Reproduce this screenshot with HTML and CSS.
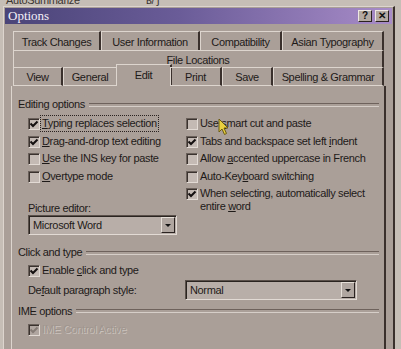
FILE: index.html
```html
<!DOCTYPE html>
<html lang="en">
<head>
  <meta charset="UTF-8">
  <title>Options</title>
  <link rel="stylesheet" href="styles.css">
</head>
<body>
  <!-- Window behind the dialog -->
  <div class="behind">
    <span class="behind-text">AutoSummarize</span>
    <span class="behind-key">ʁ/ ʃ</span>
  </div>

  <div class="window">
    <!-- Title bar -->
    <div class="titlebar">
      <span class="title">Options</span>
      <div class="title-buttons">
        <span class="tbtn">?</span>
        <span class="tbtn close">✕</span>
      </div>
    </div>

    <div class="body">
      <!-- Tab rows -->
      <div class="tab-row">
        <div class="tab w88">Track Changes</div>
        <div class="tab w99">User Information</div>
        <div class="tab w82">Compatibility</div>
        <div class="tab grow">Asian Typography</div>
      </div>
      <div class="tab-row">
        <div class="tab grow">File Locations</div>
      </div>
      <div class="tab-row front">
        <div class="tab w50">View</div>
        <div class="tab w55">General</div>
        <div class="tab active">Edit</div>
        <div class="tab w52">Print</div>
        <div class="tab w51">Save</div>
        <div class="tab grow">Spelling &amp; Grammar</div>
      </div>

      <!-- Edit page -->
      <div class="panel">
        <div class="group-title"><span>Editing options</span></div>
        <div class="columns">
          <div class="col">
            <div class="check on"><span class="box"></span><span class="focus"><u>T</u>yping replaces selection</span></div>
            <div class="check on"><span class="box"></span><span><u>D</u>rag-and-drop text editing</span></div>
            <div class="check"><span class="box"></span><span><u>U</u>se the INS key for paste</span></div>
            <div class="check"><span class="box"></span><span><u>O</u>vertype mode</span></div>
            <div class="label picture">Picture editor:</div>
            <div class="select small">
              <span class="value">Microsoft Word</span>
              <span class="arrow"></span>
            </div>
          </div>
          <div class="col right">
            <div class="check"><span class="box"></span><span>Use <u>s</u>mart cut and paste</span></div>
            <div class="check on"><span class="box"></span><span>Tabs and backspace set left <u>i</u>ndent</span></div>
            <div class="check"><span class="box"></span><span>Allow <u>a</u>ccented uppercase in French</span></div>
            <div class="check"><span class="box"></span><span>Auto-Key<u>b</u>oard switching</span></div>
            <div class="check on tall"><span class="box"></span><span>When selecting, automatically select<br>entire <u>w</u>ord</span></div>
          </div>
        </div>

        <div class="group-title second"><span>Click and type</span></div>
        <div class="check on indent"><span class="box"></span><span>Enable <u>c</u>lick and type</span></div>
        <div class="para-row">
          <span class="label">De<u>f</u>ault paragraph style:</span>
          <div class="select wide">
            <span class="value">Normal</span>
            <span class="arrow"></span>
          </div>
        </div>

        <div class="group-title"><span>IME options</span></div>
        <div class="check on indent disabled"><span class="box"></span><span>IME Control Active</span></div>
      </div>
    </div>
  </div>

  <!-- mouse pointer -->
  <svg class="cursor" width="12" height="18" viewBox="0 0 12 18">
    <path d="M1 1 L1 14 L4 11 L6.5 16.5 L8.5 15.5 L6 10 L10 10 Z" fill="#e8d040" stroke="#6a5a10" stroke-width="1"/>
  </svg>
</body>
</html>
```

FILE: styles.css
```css
/* Basic reset */
* {
  box-sizing: border-box;
}

body {
  margin: 0;
  width: 401px;
  height: 349px;
  overflow: hidden;
  background-color: #c6beb6;
  font-family: "Liberation Sans", Arial, sans-serif;
  font-size: 11px;
  letter-spacing: -0.35px;
  color: #1e1a18;
  position: relative;
}

/* Window behind the dialog */
.behind {
  height: 6px;
  overflow: hidden;
  position: relative;
  color: #3a3430;
  font-size: 11px;
  line-height: 4px;
}

.behind-text {
  position: absolute;
  left: 6px;
  top: -2px;
}

.behind-key {
  position: absolute;
  left: 146px;
  top: -2px;
}

/* Dialog window */
.window {
  margin-left: 3px;
  width: 392px;
  height: 343px;
  background-color: #aa9f98;
  border-left: 1px solid #ddd5ce;
  border-top: 1px solid #ddd5ce;
  border-right: 2px solid #3a302c;
  padding: 1px 1px 0 1px;
}

.titlebar {
  height: 16px;
  background: linear-gradient(to right, #4a4478 0%, #6a5c98 45%, #a88cc8 100%);
  display: flex;
  align-items: center;
  justify-content: space-between;
  padding: 0 3px 0 3px;
}

.title {
  color: #f4f0f8;
  font-family: "Liberation Serif", "Times New Roman", serif;
  font-size: 13px;
  letter-spacing: 0;
}

.title-buttons {
  display: flex;
  gap: 3px;
}

.tbtn {
  width: 14px;
  height: 12px;
  background-color: #b4aaa2;
  border-top: 1px solid #eee8e2;
  border-left: 1px solid #eee8e2;
  border-right: 1px solid #2a2220;
  border-bottom: 1px solid #2a2220;
  font-size: 10px;
  font-weight: bold;
  line-height: 10px;
  text-align: center;
  letter-spacing: 0;
  color: #111;
}

.body {
  padding: 7px 6px 0 6px;
}

/* Tabs */
.tab-row {
  display: flex;
  height: 19px;
  margin: 0 2px 0 2px;
}

.tab-row + .tab-row {
  height: 17px;
}

.tab-row.front {
  height: 19px;
  position: relative;
  z-index: 1;
}

.tab {
  height: 100%;
  border-top: 1px solid #ddd5ce;
  border-left: 1px solid #ddd5ce;
  border-right: 2px solid #3a302c;
  display: flex;
  align-items: center;
  justify-content: center;
  white-space: nowrap;
  font-size: 11px;
  padding-top: 1px;
}

.tab.w88 { width: 88px; }
.tab.w99 { width: 99px; }
.tab.w82 { width: 82px; }
.tab.w50 { width: 50px; }
.tab.w55 { width: 55px; }
.tab.w52 { width: 52px; }
.tab.w51 { width: 51px; }
.tab.grow { flex: 1; }

.tab.active {
  width: 56px;
  height: 22px;
  margin: -3px -2px 0 -2px;
  background-color: #aa9f98;
  padding-bottom: 2px;
}

.front .tab {
  border-bottom: 1px solid #ddd5ce;
}

.front .tab.active {
  border-bottom: none;
}

/* Page panel */
.panel {
  height: 270px;
  border-left: 1px solid #ddd5ce;
  border-right: 2px solid #3a302c;
  padding: 11px 5px 0 6px;
}

.group-title {
  display: flex;
  align-items: center;
  gap: 4px;
  height: 14px;
}

.group-title::after {
  content: "";
  flex: 1;
  height: 2px;
  border-top: 1px solid #6e625c;
  border-bottom: 1px solid #d6cec8;
  margin-top: 1px;
}

.group-title.second {
  margin-top: 10px;
}

.columns {
  display: flex;
  margin-top: 6px;
}

.col {
  width: 168px;
  padding-left: 10px;
}

.col.right {
  width: auto;
  padding-left: 0;
}

.check {
  display: flex;
  align-items: flex-start;
  gap: 2px;
  height: 17.6px;
  line-height: 13px;
  white-space: nowrap;
}

.check.tall {
  height: 30px;
}

.check.indent {
  margin: 5px 0 0 10px;
}

.box {
  width: 12px;
  height: 12px;
  flex: none;
  margin-top: 1px;
  border-top: 1px solid #6a605a;
  border-left: 1px solid #6a605a;
  border-right: 1px solid #e2dad4;
  border-bottom: 1px solid #e2dad4;
  background-color: #c4bab4;
  box-shadow: inset 1px 1px 0 #3a322e;
}

.check.on .box {
  background: #c4bab4 url("data:image/svg+xml,%3Csvg xmlns='http://www.w3.org/2000/svg' width='10' height='10'%3E%3Cpath d='M1.5 4.5 L4 7 L8.5 2.5' fill='none' stroke='%23141010' stroke-width='2'/%3E%3C/svg%3E") center no-repeat;
}

.check.disabled span:last-child {
  color: #a0968f;
  text-shadow: 1px 1px 0 #cac2bc;
}

.check.disabled .box {
  background: #b0a6a0 url("data:image/svg+xml,%3Csvg xmlns='http://www.w3.org/2000/svg' width='10' height='10'%3E%3Cpath d='M1.5 4.5 L4 7 L8.5 2.5' fill='none' stroke='%23857b75' stroke-width='2'/%3E%3C/svg%3E") center no-repeat;
}

.focus {
  outline: 1px dotted #2a2220;
  outline-offset: 1px;
}

.label {
  white-space: nowrap;
}

.label.picture {
  margin-top: 15px;
}

/* Drop-down boxes */
.select {
  height: 20px;
  display: flex;
  align-items: center;
  justify-content: space-between;
  background-color: #b8aea8;
  border-top: 1px solid #5a504a;
  border-left: 1px solid #5a504a;
  border-right: 1px solid #e2dad4;
  border-bottom: 1px solid #e2dad4;
  box-shadow: inset 1px 1px 0 #2a2420;
  padding: 1px 1px 1px 4px;
}

.select.small {
  width: 149px;
  margin-top: 1px;
}

.select.wide {
  width: 172px;
}

.arrow {
  width: 14px;
  height: 16px;
  background-color: #b0a6a0;
  border-top: 1px solid #e6dfd8;
  border-left: 1px solid #e6dfd8;
  border-right: 1px solid #2a2220;
  border-bottom: 1px solid #2a2220;
  position: relative;
}

.arrow::after {
  content: "";
  position: absolute;
  left: 3px;
  top: 6px;
  border-left: 3px solid transparent;
  border-right: 3px solid transparent;
  border-top: 3px solid #111;
}

.para-row {
  display: flex;
  align-items: center;
  justify-content: space-between;
  margin: -2px 22px 4px 10px;
}

.cursor {
  position: absolute;
  left: 218px;
  top: 118px;
}
```
